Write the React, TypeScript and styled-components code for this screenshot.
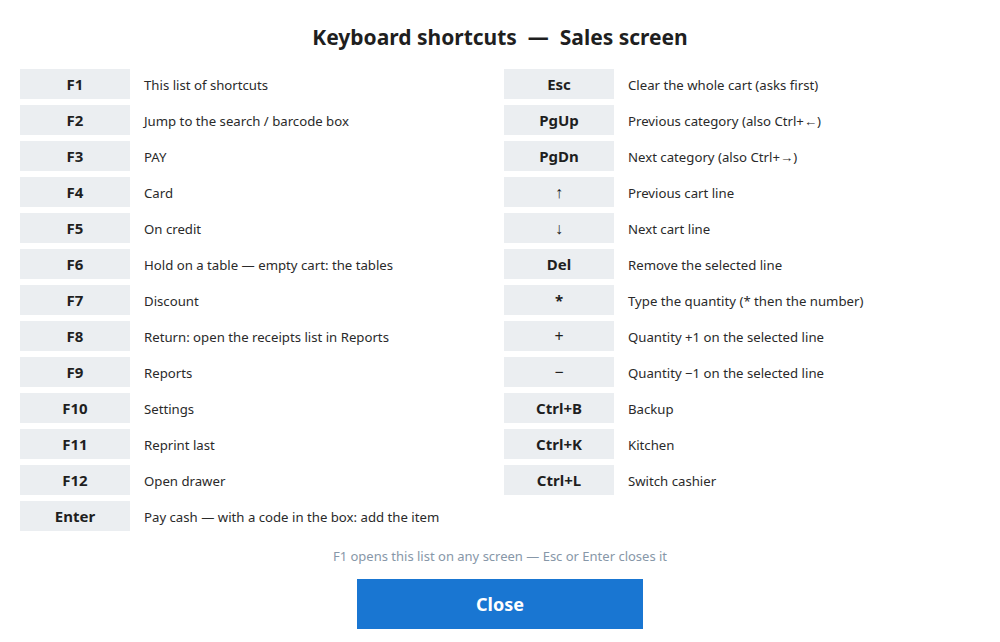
import React from "react";
import styled, { createGlobalStyle } from "styled-components";

const Global = createGlobalStyle`
  html, body {
    margin: 0;
    padding: 0;
    background: #ffffff;
  }

  body {
    font-family: "Segoe UI", "Noto Sans", "Open Sans", sans-serif;
    color: #222222;
  }
`;

interface Shortcut {
  keys: string;
  text: string;
  light?: boolean;
}

const left: Shortcut[] = [
  { keys: "F1", text: "This list of shortcuts" },
  { keys: "F2", text: "Jump to the search / barcode box" },
  { keys: "F3", text: "PAY" },
  { keys: "F4", text: "Card" },
  { keys: "F5", text: "On credit" },
  { keys: "F6", text: "Hold on a table — empty cart: the tables" },
  { keys: "F7", text: "Discount" },
  { keys: "F8", text: "Return: open the receipts list in Reports" },
  { keys: "F9", text: "Reports" },
  { keys: "F10", text: "Settings" },
  { keys: "F11", text: "Reprint last" },
  { keys: "F12", text: "Open drawer" },
  { keys: "Enter", text: "Pay cash — with a code in the box: add the item" },
];

const right: Shortcut[] = [
  { keys: "Esc", text: "Clear the whole cart (asks first)" },
  { keys: "PgUp", text: "Previous category (also Ctrl+←)" },
  { keys: "PgDn", text: "Next category (also Ctrl+→)" },
  { keys: "↑", text: "Previous cart line", light: true },
  { keys: "↓", text: "Next cart line", light: true },
  { keys: "Del", text: "Remove the selected line" },
  { keys: "*", text: "Type the quantity (* then the number)" },
  { keys: "+", text: "Quantity +1 on the selected line", light: true },
  { keys: "−", text: "Quantity −1 on the selected line", light: true },
  { keys: "Ctrl+B", text: "Backup" },
  { keys: "Ctrl+K", text: "Kitchen" },
  { keys: "Ctrl+L", text: "Switch cashier" },
];

const Screen = styled.div`
  display: flex;
  flex-direction: column;
  align-items: center;
  padding: 21px 20px 0;
`;

const Title = styled.h1`
  margin: 0 0 16px;
  font-size: 21px;
  font-weight: 700;
  line-height: 32px;
  color: #1f1f1f;
  white-space: pre;
`;

const Columns = styled.div`
  align-self: stretch;
  display: grid;
  grid-template-columns: 1fr 1fr;
  column-gap: 8px;
  align-items: start;
`;

const List = styled.div`
  display: flex;
  flex-direction: column;
  gap: 6px;
`;

const Row = styled.div`
  display: flex;
  align-items: center;
  gap: 14px;
  height: 30px;
`;

const Key = styled.div<{ light?: boolean }>`
  flex: 0 0 110px;
  height: 30px;
  display: flex;
  align-items: center;
  justify-content: center;
  background: #ebeef1;
  font-size: ${({ light }) => (light ? "16px" : "15px")};
  font-weight: ${({ light }) => (light ? 400 : 700)};
  color: #1f1f1f;
`;

const Text = styled.span`
  padding-top: 2px;
  font-size: 13.2px;
  color: #2a2a2a;
`;

const Hint = styled.p`
  margin: 16px 0 14px;
  font-size: 13px;
  color: #8797a8;
`;

const CloseButton = styled.button`
  width: 286px;
  height: 50px;
  border: none;
  background: #1976d2;
  color: #ffffff;
  font-family: inherit;
  font-size: 18px;
  font-weight: 700;
  cursor: pointer;
`;

const Column = ({ items }: { items: Shortcut[] }) => (
  <List>
    {items.map((s) => (
      <Row key={s.keys}>
        <Key light={s.light}>{s.keys}</Key>
        <Text>{s.text}</Text>
      </Row>
    ))}
  </List>
);

export default function App() {
  return (
    <>
      <Global />
      <Screen>
        <Title>{"Keyboard shortcuts  —  Sales screen"}</Title>
        <Columns>
          <Column items={left} />
          <Column items={right} />
        </Columns>
        <Hint>F1 opens this list on any screen — Esc or Enter closes it</Hint>
        <CloseButton>Close</CloseButton>
      </Screen>
    </>
  );
}
